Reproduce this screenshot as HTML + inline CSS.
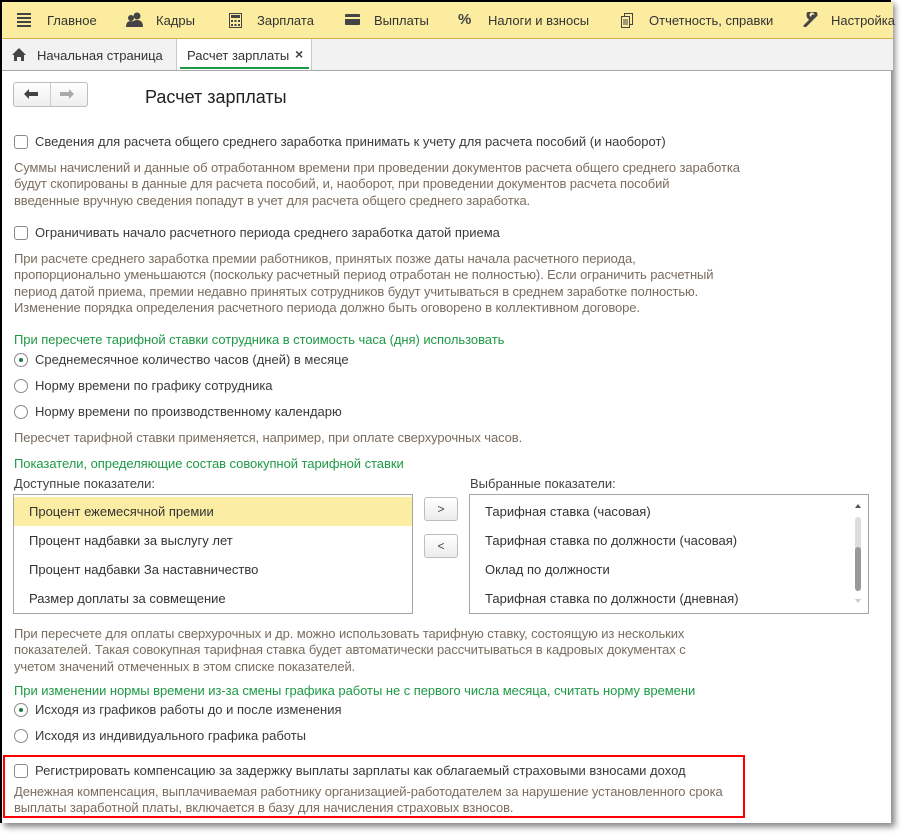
<!DOCTYPE html>
<html><head><meta charset="utf-8"><style>
*{margin:0;padding:0;box-sizing:border-box}
body{width:903px;height:838px;background:#fff;position:relative;overflow:hidden;font-family:"Liberation Sans",Arial,sans-serif;font-size:13px;color:#3a3a3a}
.a{position:absolute;white-space:nowrap}
#page{position:absolute;left:0;top:0;width:891px;height:823px;background:#fff;border-left:2px solid #000;border-top:2px solid #000;box-shadow:4px 4px 6px #888}
#top{position:absolute;left:0;top:0;width:891px;height:37px;background:#fbeca0;border-bottom:1px solid #d4b04a}
#tabs{position:absolute;left:0;top:37px;width:891px;height:32px;background:#f2f2f2;border-bottom:1px solid #a9a9a9}
.m{top:11px;color:#333;font-size:13px}
.d{color:#7a6d5f;line-height:16.3px;white-space:normal;letter-spacing:-0.1px}
.g{color:#1e9a45;letter-spacing:-0.05px}
.cb{position:absolute;width:14px;height:14px;border:1px solid #8a8a8a;border-radius:3px;background:#fff}
.rb{position:absolute;width:14px;height:14px;border:1px solid #8a8a8a;border-radius:50%;background:#fff}
.rb.on::after{content:"";position:absolute;left:4px;top:4px;width:4px;height:4px;border-radius:50%;background:#1e7a40}
.list{position:absolute;border:1px solid #a5a5a5;background:#fff}
.row{position:absolute;left:0;height:29px;line-height:29px;padding-left:15px;width:100%;color:#333}
.btn{position:absolute;width:34px;height:24px;border:1px solid #bdbdbd;border-radius:3px;background:linear-gradient(#fff,#ececec);text-align:center;line-height:22px;color:#444;font-size:12px}
</style></head><body>
<div id="page">
<div id="top">
 <svg class="a" style="left:15px;top:11px" width="14" height="14"><rect y="0" width="14" height="2" fill="#444"/><rect y="4" width="14" height="2" fill="#444"/><rect y="8" width="14" height="2" fill="#444"/><rect y="12" width="14" height="2" fill="#444"/></svg>
 <div class="a m" style="left:45px">Главное</div>
 <svg class="a" style="left:124px;top:10px" width="18" height="15"><circle cx="11" cy="4" r="3.5" fill="#444"/><path d="M5 15 Q5 8 11 8 Q17 8 17 15Z" fill="#444"/><circle cx="5" cy="6" r="3" fill="#444"/><path d="M0 15 Q0 9 5 9 Q8 9 8 12 L8 15Z" fill="#444"/></svg>
 <div class="a m" style="left:154px">Кадры</div>
 <svg class="a" style="left:227px;top:11px" width="13" height="15"><rect x="0.5" y="0.5" width="12" height="14" fill="none" stroke="#444"/><rect x="2" y="2" width="9" height="3" fill="#444"/><g fill="#444"><rect x="2" y="7" width="2" height="2"/><rect x="5.5" y="7" width="2" height="2"/><rect x="9" y="7" width="2" height="2"/><rect x="2" y="11" width="2" height="2"/><rect x="5.5" y="11" width="2" height="2"/><rect x="9" y="11" width="2" height="2"/></g></svg>
 <div class="a m" style="left:255px">Зарплата</div>
 <svg class="a" style="left:343px;top:12px" width="15" height="11"><rect width="15" height="11" rx="1" fill="#444"/><rect x="0" y="3" width="15" height="2" fill="#fbeca0"/></svg>
 <div class="a m" style="left:372px">Выплаты</div>
 <div class="a" style="left:456px;top:9px;font-weight:bold;font-size:15px;color:#444">%</div>
 <div class="a m" style="left:486px">Налоги и взносы</div>
 <svg class="a" style="left:619px;top:11px" width="12" height="15"><rect x="3.5" y="0.5" width="8" height="11" fill="none" stroke="#444"/><rect x="0.5" y="3.5" width="8" height="11" fill="#fbeca0" stroke="#444"/><path d="M2 7h5M2 9h5M2 11h5" stroke="#444"/></svg>
 <div class="a m" style="left:647px">Отчетность, справки</div>
 <svg class="a" style="left:801px;top:10px" width="15" height="15"><path d="M2 14 L9 7 M9 7 A4 4 0 1 1 13 3 L11 5 L10 4 M9 7 L8 6" stroke="#444" stroke-width="3" fill="none" stroke-linecap="round"/></svg>
 <div class="a m" style="left:829px">Настройка</div>
</div>
<div id="tabs">
 <svg class="a" style="left:10px;top:9px" width="14" height="13"><path d="M7 0 L14 7 L12 7 L12 13 L9 13 L9 9 L5 9 L5 13 L2 13 L2 7 L0 7Z" fill="#444"/></svg>
 <div class="a" style="left:35px;top:9px;color:#333">Начальная страница</div>
 <div class="a" style="left:174px;top:0;width:1px;height:31px;background:#c8c8c8"></div>
 <div class="a" style="left:175px;top:0;width:134px;height:31px;background:#fff"></div>
 <div class="a" style="left:185px;top:9px;color:#333">Расчет зарплаты</div>
 <div class="a" style="left:293px;top:7px;color:#444;font-size:14px;font-weight:bold">×</div>
 <div class="a" style="left:178px;top:28px;width:129px;height:2px;background:#1e9a45"></div>
 <div class="a" style="left:309px;top:0;width:1px;height:31px;background:#c8c8c8"></div>
</div>
<div class="a" style="left:11px;top:80px;width:75px;height:25px;border:1px solid #bdbdbd;border-radius:3px;background:linear-gradient(#fff,#eee)"></div>
<div class="a" style="left:48px;top:81px;width:1px;height:23px;background:#ccc"></div>
<svg class="a" style="left:22px;top:87px" width="14" height="10"><path d="M0 5 L5 0 L5 3 L14 3 L14 7 L5 7 L5 10Z" fill="#444"/></svg>
<svg class="a" style="left:58px;top:87px" width="14" height="10"><path d="M14 5 L9 0 L9 3 L0 3 L0 7 L9 7 L9 10Z" fill="#aaa"/></svg>
<div class="a" style="left:143px;top:85px;font-size:18px;color:#222">Расчет зарплаты</div>

<div class="cb" style="left:12px;top:133px"></div>
<div class="a" style="left:33px;top:132px">Сведения для расчета общего среднего заработка принимать к учету для расчета пособий (и наоборот)</div>
<div class="a d" style="left:12px;top:158px;width:760px">Суммы начислений и данные об отработанном времени при проведении документов расчета общего среднего заработка<br>будут скопированы в данные для расчета пособий, и, наоборот, при проведении документов расчета пособий<br>введенные вручную сведения попадут в учет для расчета общего среднего заработка.</div>

<div class="cb" style="left:12px;top:224px"></div>
<div class="a" style="left:33px;top:223px">Ограничивать начало расчетного периода среднего заработка датой приема</div>
<div class="a d" style="left:12px;top:249px;width:760px">При расчете среднего заработка премии работников, принятых позже даты начала расчетного периода,<br>пропорционально уменьшаются (поскольку расчетный период отработан не полностью). Если ограничить расчетный<br>период датой приема, премии недавно принятых сотрудников будут учитываться в среднем заработке полностью.<br>Изменение порядка определения расчетного периода должно быть оговорено в коллективном договоре.</div>

<div class="a g" style="left:12px;top:330px">При пересчете тарифной ставки сотрудника в стоимость часа (дня) использовать</div>
<div class="rb on" style="left:12px;top:351px"></div>
<div class="a" style="left:33px;top:350px">Среднемесячное количество часов (дней) в месяце</div>
<div class="rb" style="left:12px;top:377px"></div>
<div class="a" style="left:33px;top:376px">Норму времени по графику сотрудника</div>
<div class="rb" style="left:12px;top:403px"></div>
<div class="a" style="left:33px;top:402px">Норму времени по производственному календарю</div>
<div class="a d" style="left:12px;top:428px">Пересчет тарифной ставки применяется, например, при оплате сверхурочных часов.</div>

<div class="a g" style="left:12px;top:454px">Показатели, определяющие состав совокупной тарифной ставки</div>
<div class="a" style="left:12px;top:474px;color:#444">Доступные показатели:</div>
<div class="a" style="left:468px;top:474px;color:#444">Выбранные показатели:</div>
<div class="list" style="left:11px;top:492px;width:400px;height:120px">
 <div class="row" style="top:2px;background:#fbeea4">Процент ежемесячной премии</div>
 <div class="row" style="top:31px">Процент надбавки за выслугу лет</div>
 <div class="row" style="top:60px">Процент надбавки За наставничество</div>
 <div class="row" style="top:89px">Размер доплаты за совмещение</div>
</div>
<div class="btn" style="left:422px;top:495px">&gt;</div>
<div class="btn" style="left:422px;top:532px">&lt;</div>
<div class="list" style="left:467px;top:492px;width:400px;height:120px">
 <div class="row" style="top:2px">Тарифная ставка (часовая)</div>
 <div class="row" style="top:31px">Тарифная ставка по должности (часовая)</div>
 <div class="row" style="top:60px">Оклад по должности</div>
 <div class="row" style="top:89px">Тарифная ставка по должности (дневная)</div>
 <div class="a" style="left:385px;top:9px;width:0;height:0;border-left:3px solid transparent;border-right:3px solid transparent;border-bottom:4px solid #555"></div>
 <div class="a" style="left:385px;top:22px;width:6px;height:74px;border-radius:3px;background:#ddd"></div>
 <div class="a" style="left:385px;top:52px;width:6px;height:44px;border-radius:3px;background:#999"></div>
 <div class="a" style="left:385px;top:104px;width:0;height:0;border-left:3px solid transparent;border-right:3px solid transparent;border-top:4px solid #ccc"></div>
</div>

<div class="a d" style="left:12px;top:624px;width:760px">При пересчете для оплаты сверхурочных и др. можно использовать тарифную ставку, состоящую из нескольких<br>показателей. Такая совокупная тарифная ставка будет автоматически рассчитываться в кадровых документах с<br>учетом значений отмеченных в этом списке показателей.</div>

<div class="a g" style="left:12px;top:681px">При изменении нормы времени из-за смены графика работы не с первого числа месяца, считать норму времени</div>
<div class="rb on" style="left:12px;top:701px"></div>
<div class="a" style="left:33px;top:700px">Исходя из графиков работы до и после изменения</div>
<div class="rb" style="left:12px;top:727px"></div>
<div class="a" style="left:33px;top:726px">Исходя из индивидуального графика работы</div>

<div class="a" style="left:1px;top:753px;width:742px;height:63px;border:2px solid #f00"></div>
<div class="cb" style="left:12px;top:762px"></div>
<div class="a" style="left:33px;top:761px">Регистрировать компенсацию за задержку выплаты зарплаты как облагаемый страховыми взносами доход</div>
<div class="a d" style="left:12px;top:782px;width:740px">Денежная компенсация, выплачиваемая работнику организацией-работодателем за нарушение установленного срока<br>выплаты заработной платы, включается в базу для начисления страховых взносов.</div>
</div>
</body></html>
